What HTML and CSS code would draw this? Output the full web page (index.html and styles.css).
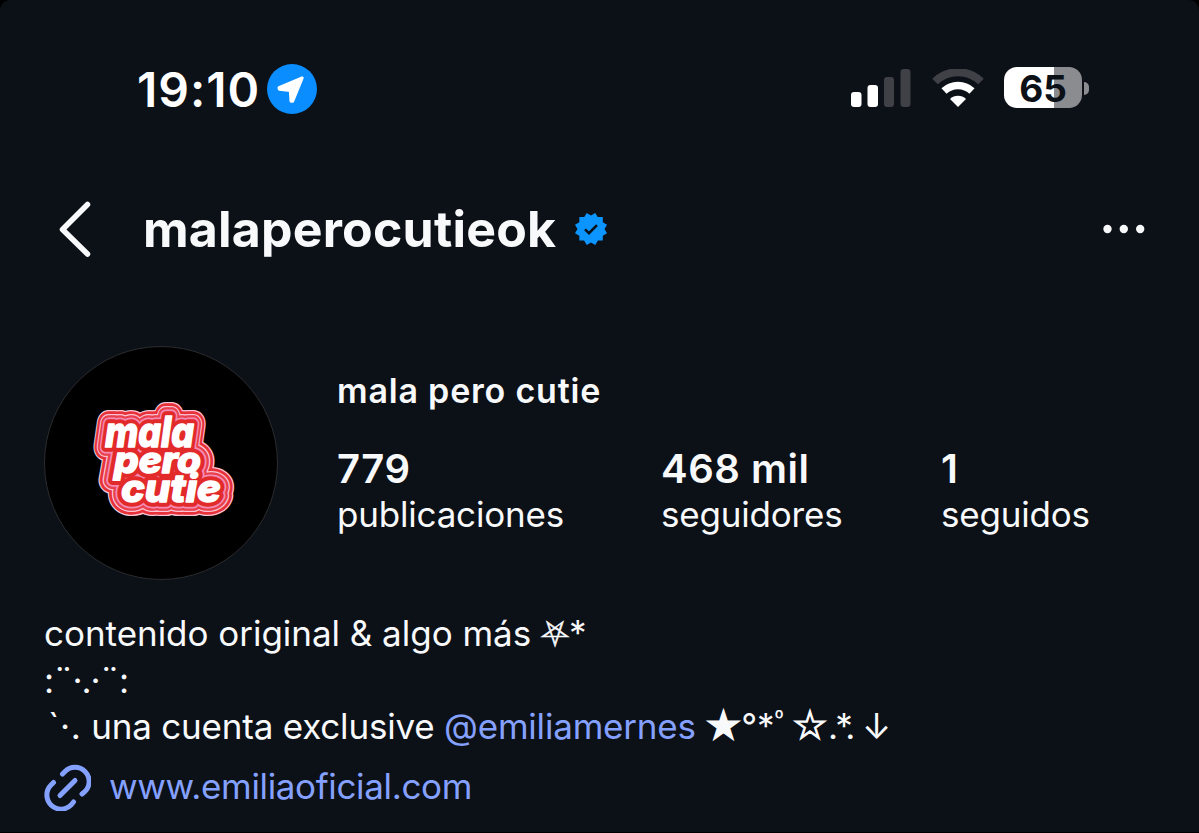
FILE: index.html
```html
<!DOCTYPE html>
<html lang="es">
<head>
  <meta charset="UTF-8">
  <title>malaperocutieok</title>
  <link rel="stylesheet" href="styles.css">
</head>
<body>
  <div class="screen">
    <div class="status-bar">
      <span class="time">19:10</span>
      <svg class="location" width="50" height="50" viewBox="0 0 50 50">
        <circle cx="25" cy="25" r="25" fill="#0a8dff"/>
        <path d="M35.200 14 L12 23.700 L12.300 25.200 L23.300 26.500 L24 37.200 L25.700 37.200 Z" fill="#fff" stroke="#fff" stroke-width="3" stroke-linejoin="round"/>
      </svg>
      <div class="status-icons">
        <svg width="60" height="40" viewBox="0 0 60 40">
          <rect x="0" y="23" width="10.500" height="15" rx="3" fill="#fff"/>
          <rect x="16.500" y="16" width="10.500" height="22" rx="3" fill="#fff"/>
          <rect x="33" y="8" width="10" height="30" rx="3" fill="#3f4146"/>
          <rect x="49.500" y="0" width="10" height="38" rx="3" fill="#3f4146"/>
        </svg>
        <svg class="wifi" width="54" height="40" viewBox="0 0 54 40">
          <path d="M4 12.500 A33 33 0 0 1 50 12.500" fill="none" stroke="#3f4146" stroke-width="8"/>
          <path d="M13 22 A20.500 20.500 0 0 1 41 22" fill="none" stroke="#fff" stroke-width="7.500"/>
          <path d="M19 30 A11.500 11.500 0 0 1 35 30 L27 38 Z" fill="#fff"/>
        </svg>
        <div class="battery"><span>65</span></div>
        <div class="battery-cap"></div>
      </div>
    </div>

    <div class="nav">
      <svg class="back" width="34" height="58" viewBox="0 0 34 58">
        <path d="M29.500 4.500 L4.500 29.500 L29.500 54" fill="none" stroke="#f8f9fb" stroke-width="5.500" stroke-linecap="round" stroke-linejoin="round"/>
      </svg>
      <h1 class="username">malaperocutieok</h1>
      <svg class="verified" width="32" height="32" viewBox="0 0 40 40">
        <path d="M19.998 3.094 14.638 0l-2.972 5.150H5.432v6.354L0 14.640 3.094 20 0 25.359l5.432 3.137v5.905h5.975L14.638 40l5.360-3.094L25.358 40l3.232-5.600h6.162v-6.010L40 25.359 36.905 20 40 14.641l-5.248-3.030v-6.460h-6.419L25.358 0l-5.360 3.094Z" fill="#0c95ff"/>
        <path d="M12.500 20.500 L17.500 25.300 L27.500 15.200" fill="none" stroke="#0b1016" stroke-width="3.200"/>
      </svg>
      <svg class="more" width="42" height="10" viewBox="0 0 42 10">
        <g fill="#f8f9fb"><circle cx="4.500" cy="5" r="4.200"/><circle cx="20.800" cy="5" r="4.200"/><circle cx="37.200" cy="5" r="4.200"/></g>
      </svg>
    </div>

    <div class="profile">
      <div class="avatar">
        <svg width="232" height="232" viewBox="45 347 232 232">
          <defs>
            <g id="logo">
              <text x="105" y="447" font-size="42" textLength="89" lengthAdjust="spacingAndGlyphs">mala</text>
              <text x="114" y="473" font-size="37" textLength="87" lengthAdjust="spacingAndGlyphs">pero</text>
              <text x="121" y="502" font-size="39" textLength="100" lengthAdjust="spacingAndGlyphs">cutie</text>
            </g>
          </defs>
          <g class="logo">
            <use href="#logo" stroke="#f9c6d6" stroke-width="28"/>
            <use href="#logo" stroke="#e8323a" stroke-width="25.500"/>
            <use href="#logo" stroke="#fbc4d6" stroke-width="20"/>
            <use href="#logo" stroke="#e9404c" stroke-width="17.500"/>
            <use href="#logo" stroke="#f48bb4" stroke-width="13"/>
            <use href="#logo" stroke="#e32a2a" stroke-width="9.500"/>
            <use href="#logo" stroke="#fff" stroke-width="1.400" fill="#fff"/>
          </g>
        </svg>
      </div>
      <div class="info">
        <div class="name">mala pero cutie</div>
        <div class="stats">
          <div class="stat posts"><strong>779</strong><span>publicaciones</span></div>
          <div class="stat followers"><strong>468 mil</strong><span>seguidores</span></div>
          <div class="stat following"><strong>1</strong><span>seguidos</span></div>
        </div>
      </div>
    </div>

    <div class="bio">
      <div class="line first">contenido original &amp; algo más <span class="symbol pentagram">⛧</span>*</div>
      <div class="line dots">:¨·.·¨:</div>
      <div class="line"><span class="tick">`·.</span> una cuenta exclusive <a class="mention">@emiliamernes</a> <span class="symbol star">★</span><span class="ring">°</span>*<span class="small-ring">⁰</span> <span class="symbol star open">☆</span><span class="tight">.*.</span> ↓</div>
    </div>

    <div class="link">
      <svg width="47" height="47" viewBox="0 0 47 47">
        <g fill="none" stroke="#85a1ff" stroke-width="5" stroke-linecap="round">
          <path d="M18.500 10 L21 7.500 A14.100 14.100 0 0 1 41 27.500 L38 30"/>
          <path d="M9.500 18.500 L7 21 A14.100 14.100 0 0 0 27 41 L29.500 38"/>
          <path d="M16 31.500 L31 16.500"/>
        </g>
      </svg>
      <a>www.emiliaoficial.com</a>
    </div>
  </div>
</body>
</html>
```
FILE: styles.css
```css
body {
  margin: 0;
  background: #000;
  font-family: Inter, 'Liberation Sans', sans-serif;
  color: #f8f9fb;
}

svg {
  display: block;
  flex-shrink: 0;
}

.screen {
  box-sizing: border-box;
  width: 1199px;
  height: 832px;
  padding-top: 59px;
  background: #0c1017;
  border-radius: 10px 10px 0 0;
  overflow: hidden;
  white-space: nowrap;
}

.status-bar {
  display: flex;
  align-items: center;
  height: 60px;
  padding: 0 110px 0 137px;
}

.time {
  width: 130px;
  font-size: 48px;
  font-weight: 560;
  letter-spacing: 1px;
  color: #fff;
}

.status-icons {
  display: flex;
  align-items: center;
  margin-left: auto;
}

.wifi {
  margin: 0 19px 0 20px;
}

.battery {
  width: 78px;
  height: 41px;
  margin-bottom: 3px;
  border-radius: 13px;
  background: linear-gradient(to right, #fff 50px, #8b8c8f 50px);
  color: #0c1017;
  font-size: 37px;
  font-weight: 700;
  line-height: 43px;
  text-align: center;
}

.battery-cap {
  width: 5px;
  height: 13px;
  margin: 0 0 2px 2px;
  border-radius: 0 7px 7px 0;
  background: #8b8c8f;
}

.nav {
  display: flex;
  align-items: center;
  height: 60px;
  margin-top: 80px;
  padding: 0 54px 0 58px;
}

.username {
  width: 432px;
  margin: 0 0 0 51px;
  font-size: 50px;
  font-weight: 700;
  line-height: 60px;
  letter-spacing: 0.2px;
}

.more {
  margin-left: auto;
}

.profile {
  display: flex;
  height: 234px;
  margin-top: 87px;
  padding-left: 44px;
}

.avatar {
  width: 232px;
  height: 232px;
  border: 1px solid #2b2c2e;
  border-radius: 50%;
  background: #000;
}

.logo {
  font-family: Inter, sans-serif;
  font-weight: 800;
  font-style: italic;
  stroke-linejoin: round;
}

.info {
  padding: 22px 0 0 59px;
}

.name {
  font-size: 34px;
  font-weight: 600;
  line-height: 46px;
  letter-spacing: 0.8px;
}

.stats {
  display: flex;
  margin-top: 32px;
}

.stat strong,
.stat span {
  display: block;
  line-height: 46px;
}

.stat strong {
  font-size: 40px;
  font-weight: 600;
  letter-spacing: 0.5px;
}

.stat span {
  margin-top: -1px;
  font-size: 35px;
  letter-spacing: -0.2px;
}

.posts {
  width: 324px;
}

.followers {
  width: 280px;
}

.bio {
  margin-top: 30px;
  padding-left: 44px;
  font-size: 35px;
  letter-spacing: -0.2px;
}

.line {
  height: 46.5px;
  line-height: 46.5px;
}

.first {
  letter-spacing: -0.03px;
}

.dots {
  letter-spacing: -1.1px;
}

.tick {
  margin-left: 4px;
  letter-spacing: 0.7px;
}

.symbol {
  font-family: 'DejaVu Sans', sans-serif;
  letter-spacing: 0;
}

.pentagram {
  -webkit-text-stroke: 0.5px;
}

.star {
  font-size: 40px;
  line-height: 0;
  -webkit-text-stroke: 1.5px;
}

.open {
  margin-left: -1px;
  -webkit-text-stroke: 1.2px;
}

.ring {
  margin-left: 0;
}

.small-ring {
  font-size: 20px;
  line-height: 0;
  vertical-align: 12px;
}

.tight {
  letter-spacing: -2.8px;
}

.mention,
.link a {
  color: #85a1ff;
}

.link {
  display: flex;
  align-items: center;
  height: 50px;
  margin-top: 13px;
  padding-left: 44px;
  font-size: 35px;
  letter-spacing: -0.35px;
}

.link a {
  margin: -3px 0 0 18px;
}
```
